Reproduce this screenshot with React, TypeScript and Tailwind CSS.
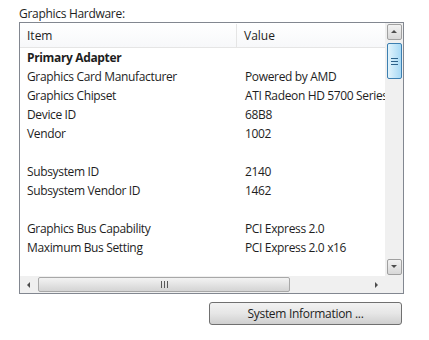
import React from 'react'

const rows: { item: string; value: string; bold?: boolean }[] = [
  { item: 'Primary Adapter', value: '', bold: true },
  { item: 'Graphics Card Manufacturer', value: 'Powered by AMD' },
  { item: 'Graphics Chipset', value: 'ATI Radeon HD 5700 Series' },
  { item: 'Device ID', value: '68B8' },
  { item: 'Vendor', value: '1002' },
  { item: '', value: '' },
  { item: 'Subsystem ID', value: '2140' },
  { item: 'Subsystem Vendor ID', value: '1462' },
  { item: '', value: '' },
  { item: 'Graphics Bus Capability', value: 'PCI Express 2.0' },
  { item: 'Maximum Bus Setting', value: 'PCI Express 2.0 x16' },
]

function Arrow({ dir }: { dir: 'up' | 'down' | 'left' | 'right' }) {
  const pts = {
    up: '1,5 4,2 7,5',
    down: '1,2 4,5 7,2',
    left: '5,1 2,4 5,7',
    right: '3,1 6,4 3,7',
  }[dir]
  return (
    <svg width="8" height="8" viewBox="0 0 8 8">
      <polygon points={pts} fill="#4d4d4d" />
    </svg>
  )
}

export default function App() {
  return (
    <div
      className="h-[340px] w-[429px] bg-white pl-[19px] pt-[5px] text-[12px] text-[#1e1e1e]"
      style={{ fontFamily: '"Open Sans", "Noto Sans", sans-serif' }}
    >
      <div className="h-[17px] leading-[17px] tracking-[-0.3px]">Graphics Hardware:</div>

      {/* list view */}
      <div className="flex h-[272px] w-[385px] flex-col border border-[#828790]">
        <div className="flex h-[253px]">
          <div className="w-[365px] overflow-hidden">
            <div className="flex h-[25px] items-center border-b border-[#e5e5e5] bg-gradient-to-b from-white to-[#f7f8fa] pt-[1px]">
              <div className="w-[217px] shrink-0 border-r border-[#e5e5e5] pl-[7px] leading-[24px]">Item</div>
              <div className="pl-[7px] whitespace-nowrap">Value</div>
            </div>
            {rows.map((r, i) => (
              <div key={i} className="flex h-[19px] items-center tracking-[-0.35px] whitespace-nowrap">
                <div className={`w-[218px] shrink-0 pl-[7px] ${r.bold ? 'font-bold' : ''}`}>{r.item}</div>
                <div className="shrink-0 pl-[7px]">{r.value}</div>
              </div>
            ))}
          </div>
          {/* vertical scrollbar */}
          <div className="flex w-[18px] flex-col items-center bg-[#f0f0f0] px-[1px] pt-[1px]">
            <div className="flex h-[16px] w-[15px] items-center justify-center rounded-[2px] border border-[#a0a0a0] bg-gradient-to-b from-[#f2f2f2] to-[#d8d8d8]">
              <Arrow dir="up" />
            </div>
            <div className="mt-[3px] flex h-[36px] w-[15px] flex-col items-center justify-center gap-[2px] rounded-[2px] border border-[#3c7fb1] bg-gradient-to-r from-[#e3f4fc] to-[#a7d9f5]">
              <div className="h-[1px] w-[7px] bg-[#2c628b]" />
              <div className="h-[1px] w-[7px] bg-[#2c628b]" />
              <div className="h-[1px] w-[7px] bg-[#2c628b]" />
            </div>
            <div className="flex-1" />
            <div className="mb-[1px] flex h-[16px] w-[15px] items-center justify-center rounded-[2px] border border-[#a0a0a0] bg-gradient-to-b from-[#f2f2f2] to-[#d8d8d8]">
              <Arrow dir="down" />
            </div>
          </div>
        </div>
        {/* horizontal scrollbar */}
        <div className="flex h-[17px]">
          <div className="flex w-[365px] items-center bg-[#f0f0f0] py-[1px]">
            <div className="flex w-[18px] justify-center">
              <Arrow dir="left" />
            </div>
            <div className="flex h-[15px] w-[252px] items-center justify-center rounded-[2px] border border-[#a8a8a8] bg-gradient-to-b from-[#f3f3f3] to-[#d4d4d4]">
              <div className="flex gap-[2px]">
                <div className="h-[7px] w-[1px] bg-[#5a5a5a]" />
                <div className="h-[7px] w-[1px] bg-[#5a5a5a]" />
                <div className="h-[7px] w-[1px] bg-[#5a5a5a]" />
              </div>
            </div>
            <div className="flex-1" />
            <div className="flex w-[18px] justify-center">
              <Arrow dir="right" />
            </div>
          </div>
          <div className="flex-1 bg-[#f0f0f0]" />
        </div>
      </div>

      <div className="flex w-[383px] justify-end pt-[8px]">
        <button className="h-[23px] w-[193px] rounded-[3px] border border-[#707070] bg-gradient-to-b from-[#f2f2f2] via-[#e6e6e6] to-[#cfcfcf] tracking-[-0.3px] text-[#1e1e1e]">
          System Information ...
        </button>
      </div>
    </div>
  )
}
